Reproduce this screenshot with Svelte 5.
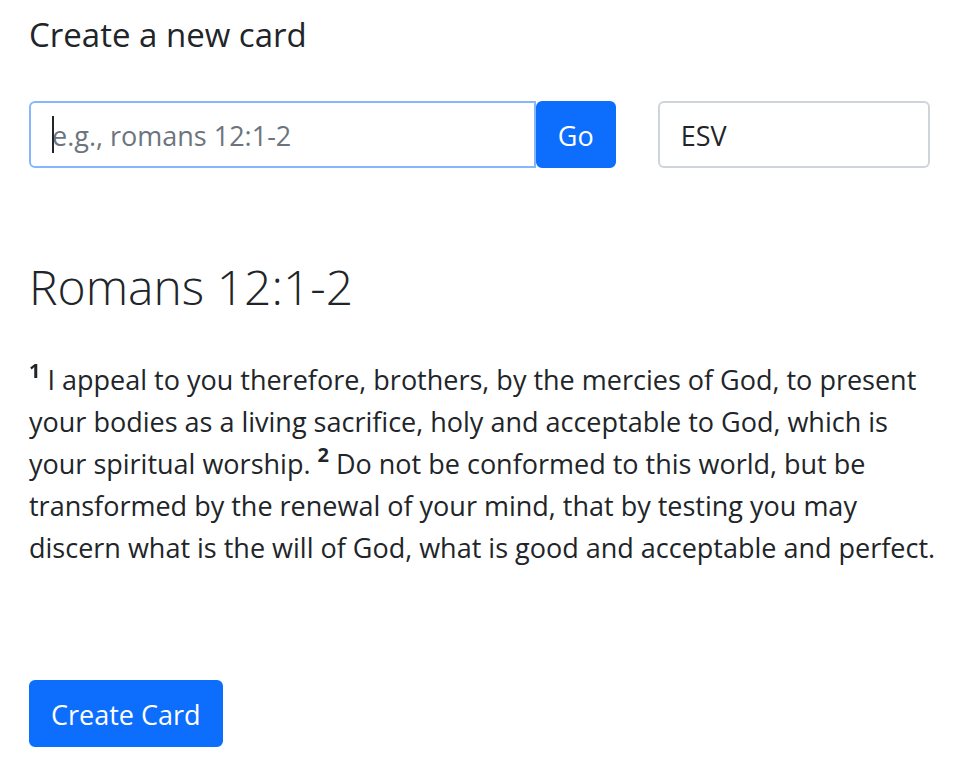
<script>
  let query = $state('');
  let version = $state('ESV');
  let focused = $state(true);
</script>

<main>
  <h1>Create a new card</h1>
  <form class="search" onsubmit={(e) => e.preventDefault()}>
    <div class="group">
      <div class="field">
        <!-- svelte-ignore a11y_autofocus -->
        <input
          type="text"
          class:empty={!query}
          aria-label="Passage"
          placeholder="e.g., romans 12:1-2"
          bind:value={query}
          onfocus={() => (focused = true)}
          onblur={() => (focused = false)}
          autofocus
        />
        {#if focused && !query}<i class="caret" aria-hidden="true"></i>{/if}
      </div>
      <button type="submit">Go</button>
    </div>
    <select aria-label="Version" bind:value={version}>
      <option>ESV</option>
    </select>
  </form>
  <h2>Romans 12:1-2</h2>
  <p>
    <sup>1</sup> I appeal to you therefore, brothers, by the mercies of God, to present your bodies as a living sacrifice, holy and acceptable to God, which is your spiritual worship. <sup>2</sup> Do not be conformed to this world, but be transformed by the renewal of your mind, that by testing you may discern what is the will of God, what is good and acceptable and perfect.
  </p>
  <button type="button">Create Card</button>
</main>

<style>
  :global(body) {
    margin: 0;
    background: #fff;
  }
  main {
    padding: 14px 32px 24px 29px;
    color: #212529;
    font-family: "Open Sans", "Noto Sans", sans-serif;
    font-size: 27px;
    line-height: 42px;
  }
  h1 {
    margin: 0 0 45px;
    font-size: 33px;
    font-weight: 400;
  }
  .search {
    display: grid;
    grid-template-columns: repeat(3, minmax(0, 1fr));
    gap: 42px;
  }
  .group {
    display: flex;
    grid-column: span 2;
  }
  .field {
    position: relative;
    flex: 1;
    min-width: 0;
  }
  input,
  select,
  button {
    box-sizing: border-box;
    height: 67px;
    margin: 0;
    border: 2px solid #ced4da;
    border-radius: 6px;
    padding: 2px 21px 0;
    background: #fff;
    color: #212529;
    font: inherit;
    outline: none;
  }
  input {
    display: block;
    width: 100%;
    border-color: #86b7fe;
    border-radius: 6px 0 0 6px;
  }
  .empty {
    caret-color: transparent;
  }
  .caret {
    position: absolute;
    top: 15px;
    left: 23px;
    width: 2px;
    height: 37px;
    background: #212529;
    pointer-events: none;
  }
  input::placeholder {
    color: #6c757d;
    opacity: 1;
  }
  select {
    width: 100%;
    appearance: none;
  }
  button {
    border-color: #0d6efd;
    padding: 2px 20px 0;
    background: #0d6efd;
    color: #fff;
    cursor: pointer;
  }
  h2 {
    margin: 88px 0 41px;
    font-size: 48px;
    font-weight: 300;
    line-height: 62px;
  }
  p {
    margin: 0 -16px 111px 0;
  }
  sup {
    position: relative;
    top: -12px;
    font-size: 20px;
    font-weight: 700;
    line-height: 0;
    vertical-align: baseline;
  }
</style>
